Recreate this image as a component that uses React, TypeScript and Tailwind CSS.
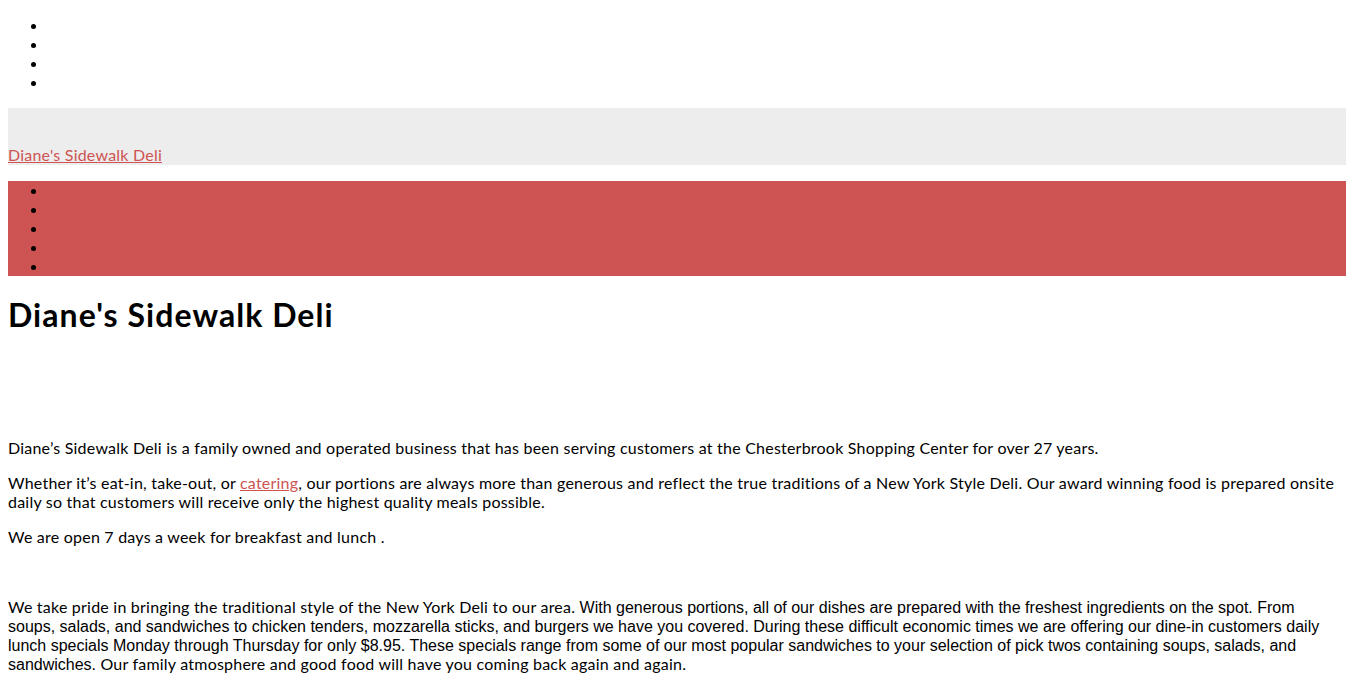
export default function App() {
  const body = "font-['Lato','Open_Sans',sans-serif] text-[16px] leading-[19px] tracking-[0.22px] text-black";
  return (
    <div className={`bg-white min-h-screen pt-4 pl-2 pr-5 ${body}`}>
      <ul className="list-disc pl-10 mb-4 -translate-y-px">
        <li className="h-[19px]"></li>
        <li className="h-[19px]"></li>
        <li className="h-[19px]"></li>
        <li className="h-[19px]"></li>
      </ul>

      <header className="bg-[#ededed] pt-[38px]">
        <a href="#" className="block w-fit h-[19px] -translate-y-px text-[#cd5452] underline">
          Diane's Sidewalk Deli
        </a>
      </header>

      <nav className="bg-[#cd5452] mt-4">
        <ul className="list-disc pl-10 -translate-y-px">
          <li className="h-[19px]"></li>
          <li className="h-[19px]"></li>
          <li className="h-[19px]"></li>
          <li className="h-[19px]"></li>
          <li className="h-[19px]"></li>
        </ul>
      </nav>

      <h1 className="mt-[20px] text-[32px] leading-[37px] tracking-[1.05px] font-bold">Diane's Sidewalk Deli</h1>

      <main className="mt-[105px]">
        <p>
          Diane’s Sidewalk Deli is a family owned and operated business that has been serving customers at the
          Chesterbrook Shopping Center for over 27 years.
        </p>
        <p className="mt-4">
          Whether it’s eat-in, take-out, or{" "}
          <a href="#" className="text-[#cd5452] underline">
            catering
          </a>
          , our portions are always more than generous and reflect the true traditions of a New York Style Deli. Our
          award winning food is prepared onsite daily so that customers will receive only the highest quality meals
          possible.
        </p>
        <p className="mt-4">We are open 7 days a week for breakfast and lunch .</p>
        <p className="mt-[51px] pb-2">
          We take pride in bringing the traditional style of the New York Deli to our area.{" "}
          <span className="font-['Liberation_Sans',Arial,sans-serif] tracking-normal leading-[15px]">
            With generous portions, all of our dishes are prepared with the freshest ingredients on the spot. From
            soups, salads, and sandwiches to chicken tenders, mozzarella sticks, and burgers we have you covered. During
            these difficult economic times we are offering our dine-in customers daily lunch specials Monday through
            Thursday for only $8.95. These specials range from some of our most popular sandwiches to your selection of
            pick twos containing soups, salads, and sandwiches.
          </span>{" "}
          Our family atmosphere and good food will have you coming back again and again.
        </p>
      </main>
    </div>
  );
}
